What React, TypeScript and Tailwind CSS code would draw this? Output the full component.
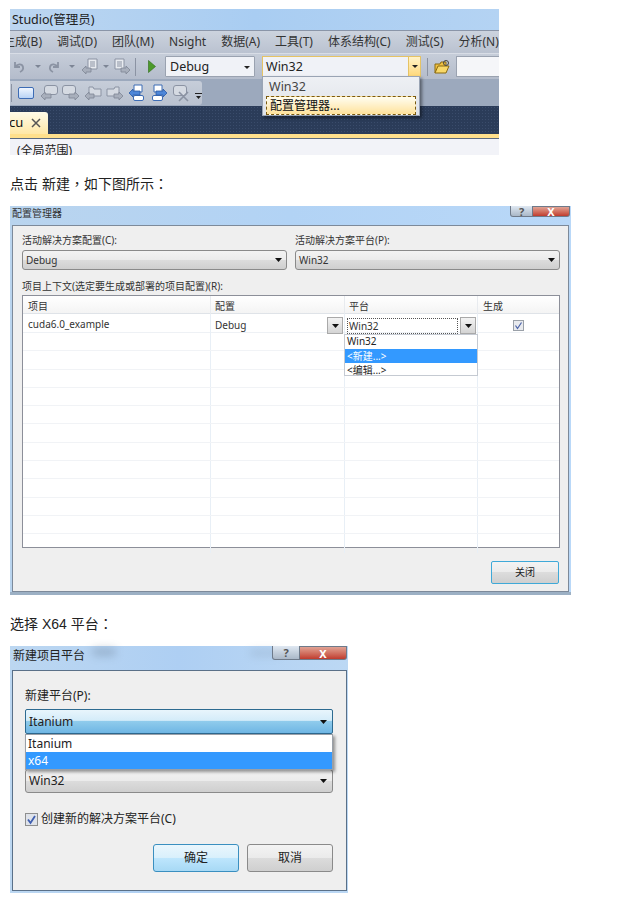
const FONT = "font-['Noto_Sans','Noto_Sans_CJK_SC',sans-serif]";
const BODY = "font-['Liberation_Sans','Noto_Sans_CJK_TC',sans-serif]";

/* ─── Little toolbar drawings ─── */
function Undo({ flip }: { flip?: boolean }) {
  return (
    <svg width="14" height="14" viewBox="0 0 14 14" className={flip ? '-scale-x-100' : ''}>
      <path d="M3 2v5h5M3 7c2-3 7-4 8 0 .5 2-1 4-3 5" fill="none" stroke="#8b93a3" strokeWidth="1.8" />
    </svg>
  );
}

function TinyCaret({ className }: { className: string }) {
  return (
    <svg width="6" height="3" viewBox="0 0 6 3" className={className}>
      <path d="M0 0h6L3 3z" fill="#7d8595" />
    </svg>
  );
}

function DocArrow({ flip, className }: { flip?: boolean; className: string }) {
  return (
    <svg width="18" height="18" viewBox="0 0 18 18" className={`${className} ${flip ? '-scale-x-100' : ''}`}>
      <path d="M7 1h9v10H7z" fill="#e8ebf0" stroke="#8b93a3" />
      <path d="M9 4h5M9 6h5M9 8h5" stroke="#8b93a3" />
      <path d="M1 12l4-4v2h5v4H5v2z" fill="#a8afbc" stroke="#7f8796" strokeWidth=".8" />
    </svg>
  );
}

function Bubble({ right }: { right?: boolean }) {
  return (
    <svg width="18" height="18" viewBox="0 0 18 18" className={right ? '-scale-x-100' : ''}>
      <rect x="4.5" y="1.5" width="13" height="9" rx="2.5" fill="#d5dae2" stroke="#8b93a3" />
      <path d="M1 12l4-4v2h6v4H5v2z" fill="#a8afbc" stroke="#7f8796" strokeWidth=".8" />
    </svg>
  );
}

function Folder({ right }: { right?: boolean }) {
  return (
    <svg width="18" height="18" viewBox="0 0 18 18" className={right ? '-scale-x-100' : ''}>
      <path d="M5 3h4l1 2h7v7H5z" fill="#d5dae2" stroke="#8b93a3" />
      <path d="M1 12l4-4v2h5v4H5v2z" fill="#a8afbc" stroke="#7f8796" strokeWidth=".8" />
    </svg>
  );
}

function BlueDoc({ right }: { right?: boolean }) {
  return (
    <svg width="18" height="18" viewBox="0 0 18 18" className={right ? '-scale-x-100' : ''}>
      <path d="M6 1h8v7H6z" fill="#fff" stroke="#3d6cb5" />
      <rect x="5.5" y="11.5" width="10" height="5" rx="1.5" fill="#fff" stroke="#3d6cb5" />
      <path d="M1 9l4-4v2h7v4H5v2z" fill="#4d86d8" stroke="#2b5aa6" strokeWidth=".8" />
    </svg>
  );
}

function Arrow() {
  return (
    <svg width="7" height="4" viewBox="0 0 7 4">
      <path d="M0 0h7L3.5 4z" fill="#111" />
    </svg>
  );
}

/* ─── Aero window title strip ─── */
function CaptionButtons({ big }: { big?: boolean }) {
  return (
    <div className={`absolute top-0 right-px flex ${big ? 'h-[14px]' : 'h-[11px]'}`}>
      <div className={`${big ? 'w-[28px]' : 'w-[23px]'} flex items-center justify-center rounded-bl-[3px] border border-t-0 border-[#6e7a8a] bg-gradient-to-b from-[#dfe8f2] to-[#aab8c8] text-[11px] leading-none font-bold text-[#555]`}>
        ?
      </div>
      <div className={`${big ? 'w-[47px]' : 'w-[37px]'} flex items-center justify-center rounded-br-[3px] border border-l-0 border-[#6e7a8a] bg-gradient-to-b from-[#e0a294] to-[#bf3a2e] text-[11px] leading-none font-bold text-white`}>
        X
      </div>
    </div>
  );
}

/* ─── Windows 7 style combo ─── */
function Combo({ label, className }: { label: string; className: string }) {
  return (
    <div className={`flex items-center justify-between rounded-[3px] border border-[#8a8a8a] bg-[linear-gradient(#f3f3f3_0%,#ebebeb_48%,#dcdcdc_50%,#cfcfcf_100%)] ${className}`}>
      <span>{label}</span>
      <Arrow />
    </div>
  );
}

function VsScreenshot() {
  const menu = ['调试(D)', '团队(M)', 'Nsight', '数据(A)', '工具(T)', '体系结构(C)', '测试(S)', '分析(N)'];
  return (
    <div className="relative w-[489px] h-[146px] overflow-hidden text-[12px] text-[#222]">
      <div className="h-[21px] pl-[2px] leading-[21px] text-[12.5px] bg-gradient-to-r from-[#bcd6f0] via-[#a9cdf2] to-[#b4d3f3]">
        Studio(管理员)
      </div>
      <div className="h-[23px] flex gap-[15px] items-center border-t border-[#8a95a8] bg-gradient-to-b from-[#ccd3de] to-[#bac2d0] text-[#333] whitespace-nowrap">
        <span className="-ml-[7px]">生成(B)</span>
        {menu.map((m) => (
          <span key={m}>{m}</span>
        ))}
      </div>
      <div className="h-[26px] flex items-center bg-gradient-to-b from-[#c6cdd9] to-[#b4bccb] border-t border-[#d8dde6]">
        <div className="ml-[2px]"><Undo /></div>
        <TinyCaret className="ml-[9px]" />
        <div className="ml-[6px]"><Undo flip /></div>
        <TinyCaret className="ml-[8px]" />
        <DocArrow className="ml-[6px]" />
        <TinyCaret className="ml-[4px]" />
        <DocArrow flip className="ml-[4px]" />
        <div className="ml-[4px] w-px h-[18px] bg-[#8b93a3]" />
        <svg width="8" height="13" viewBox="0 0 8 13" className="ml-[12px]">
          <path d="M.5 .5l7 6-7 6z" fill="#4c9a2a" stroke="#2d6a17" strokeWidth=".6" />
        </svg>
        <div className="ml-[9px] w-[90px] h-[21px] flex items-center justify-between px-[4px] pt-px bg-[#f0f2f7] border border-[#9aa2b0] rounded-[1px] text-[12.5px]">
          <span>Debug</span>
          <svg width="6" height="3" viewBox="0 0 6 3"><path d="M0 0h6L3 3z" fill="#222" /></svg>
        </div>
        <div className="ml-[7px] w-[159px] h-[21px] flex items-center border border-[#e5c365] bg-[#f0f2f7] text-[12.5px]">
          <span className="flex-1 pl-[3px] pt-px">Win32</span>
          <div className="w-[12px] h-full flex items-center justify-center border-l border-[#e5c365] bg-gradient-to-b from-[#fff3c8] to-[#ffd87a]">
            <svg width="6" height="3" viewBox="0 0 6 3"><path d="M0 0h6L3 3z" fill="#222" /></svg>
          </div>
        </div>
        <div className="ml-[6px] w-px h-[18px] bg-[#8b93a3]" />
        <svg width="17" height="16" viewBox="0 0 17 16" className="ml-[6px]">
          <path d="M1 14V5h5l1-2h5v3" fill="#f0c040" stroke="#8a6a10" />
          <path d="M1 14l3-7h11l-3 7z" fill="#f8d868" stroke="#8a6a10" />
          <circle cx="12" cy="4" r="2.5" fill="none" stroke="#444" />
        </svg>
        <div className="ml-[5px] flex-1 h-[21px] bg-[#f5f6f9] border border-[#9aa2b0] border-r-0 rounded-l-[1px]" />
      </div>
      <div className="h-[27px] flex items-center bg-[#9ca9bd]">
        <div className="h-[24px] w-[192px] flex items-center bg-gradient-to-b from-[#c6cdd9] to-[#b9c1cf] rounded-r-[3px]">
          <div className="w-px h-[18px] ml-px bg-[#8b93a3]" />
          <div className="ml-[6px] w-[16px] h-[12px] rounded-[2px] border border-[#3d6cb5] bg-gradient-to-b from-[#f0f6ff] to-[#b9d3f5]" />
          <div className="ml-[6px] flex items-center gap-[4px]">
            <Bubble />
            <Bubble right />
            <Folder />
            <Folder right />
            <BlueDoc />
            <BlueDoc right />
          </div>
          <svg width="18" height="18" viewBox="0 0 18 18" className="ml-[4px]">
            <rect x="1.5" y="1.5" width="13" height="10" rx="2.5" fill="#d5dae2" stroke="#8b93a3" />
            <path d="M7 8l9 9M16 8l-9 9" stroke="#8b93a3" strokeWidth="1.6" />
          </svg>
          <svg width="7" height="7" viewBox="0 0 7 7" className="ml-[5px] mt-[8px]">
            <path d="M0 0h7v1H0zM1 3h5L3.5 6z" fill="#222" />
          </svg>
        </div>
      </div>
      <div className="h-[28px] flex items-end bg-[#2b3c59] bg-[radial-gradient(#3a4c6b_0.7px,transparent_0.9px)] bg-[length:3px_3px]">
        <div className="w-[38px] h-[22px] flex items-center justify-between pr-[7px] rounded-tr-[3px] bg-gradient-to-b from-[#fffbe8] to-[#ffe8a6] text-[#111] text-[13px]">
          <span className="-ml-[1px]">cu</span>
          <svg width="10" height="10" viewBox="0 0 10 10">
            <path d="M1 1l8 8M9 1l-8 8" stroke="#555" strokeWidth="1.5" />
          </svg>
        </div>
      </div>
      <div className="h-[5px] bg-[#ffe08c] border-b border-[#5a6a80]" />
      <div className="h-[16px] pl-[7px] bg-[#f2f3f8] text-[12px] leading-[24px] overflow-hidden">(全局范围)</div>

      {/* open platform dropdown */}
      <div className="absolute left-[252px] top-[67px] w-[158px] h-[40px] px-[3px] border border-[#9aa4b4] bg-gradient-to-b from-[#eef0f4] to-[#dfe3e9] shadow-[2px_2px_3px_rgba(0,0,0,0.45)] text-[12px]">
        <div className="h-[19px] pl-[3px] leading-[19px] text-[12.5px] text-[#444]">Win32</div>
        <div className="h-[19px] pl-[3px] leading-[18px] border border-dashed border-[#7a5a10] bg-gradient-to-b from-[#fffdf0] to-[#ffe29a] text-[#111] whitespace-nowrap">
          配置管理器...
        </div>
      </div>
    </div>
  );
}

function ConfigDialog() {
  const rows = Array.from({ length: 12 });
  return (
    <div className="relative w-[561px] h-[389px] text-[10px] text-[#333] bg-gradient-to-r from-[#b9d4ee] via-[#b2d3f5] to-[#b9d8f8] border-b-[3px] border-[#9cb0c4]">
      <div className="h-[19px] pl-[2px] leading-[15px] text-[#333]">配置管理器</div>
      <CaptionButtons />
      <div className="mx-[2px] h-[367px] pl-[9px] pr-[8px] pt-[7px] bg-[#efefef] border border-[#7d8a9a]">
        <div className="flex gap-[8px]">
          <div className="w-[265px]">
            <div className="h-[15px] leading-[15px]">活动解决方案配置(C):</div>
            <Combo label="Debug" className="mt-[2px] h-[20px] px-[3px] pr-[4px]" />
          </div>
          <div className="w-[265px]">
            <div className="h-[15px] leading-[15px]">活动解决方案平台(P):</div>
            <Combo label="Win32" className="mt-[2px] h-[20px] px-[3px] pr-[4px]" />
          </div>
        </div>
        <div className="mt-[9px] h-[15px] leading-[15px]">项目上下文(选定要生成或部署的项目配置)(R):</div>
        <div className="mt-px h-[253px] bg-white border border-[#8c8f99]">
          <div className="h-[18px] grid grid-cols-[188px_134px_133px_1fr] bg-gradient-to-b from-white to-[#f4f4f4] border-b border-[#dfe3e8]">
            <span className="pl-[5px] leading-[20px] border-r border-[#e8ebef]">项目</span>
            <span className="pl-[4px] leading-[20px] border-r border-[#e8ebef]">配置</span>
            <span className="pl-[4px] leading-[20px] border-r border-[#e8ebef]">平台</span>
            <span className="pl-[5px] leading-[20px]">生成</span>
          </div>
          <div className="h-[19px] grid grid-cols-[188px_134px_133px_1fr] items-stretch border-b border-[#eef1f5]">
            <span className="pl-[5px] leading-[21px] border-r border-[#e8eff6]">cuda6.0_example</span>
            <div className="pl-[4px] pr-[1px] pt-[2px] flex items-center justify-between border-r border-[#e8eff6]">
              <span>Debug</span>
              <div className="w-[16px] h-[17px] flex items-center justify-center border border-[#a9a9a9] bg-gradient-to-b from-[#f3f3f3] to-[#d4d4d4]"><Arrow /></div>
            </div>
            <div className="pl-[2px] pr-[1px] pt-[2px] flex items-center justify-between border-r border-[#e8eff6]">
              <div className="w-[111px] h-[16px] pl-[1px] leading-[15px] border border-dotted border-[#555]">Win32</div>
              <div className="w-[16px] h-[17px] flex items-center justify-center border border-[#a9a9a9] bg-gradient-to-b from-[#f3f3f3] to-[#d4d4d4]"><Arrow /></div>
            </div>
            <div className="pt-[2px] flex items-center justify-center">
              <div className="w-[11px] h-[11px] flex items-center justify-center border border-[#9aa0a8] bg-[#e8eaee]">
                <svg width="9" height="9" viewBox="0 0 9 9"><path d="M1.5 4.5l2 3 4-6" fill="none" stroke="#4a62a8" strokeWidth="1.2" /></svg>
              </div>
            </div>
          </div>
          {rows.map((_, i) => (
            <div key={i} className="h-[18.3px] grid grid-cols-[188px_134px_133px_1fr] border-b border-[#f1f3f6] last:border-b-0">
              <span className="border-r border-[#e8eff6]" />
              <span className="border-r border-[#e8eff6]" />
              <span className="border-r border-[#e8eff6]" />
              <span />
            </div>
          ))}
        </div>
        <div className="mt-[13px] flex justify-end pr-px">
          <div className="w-[68px] h-[23px] flex items-center justify-center rounded-[2px] border border-[#3fa9d8] bg-[linear-gradient(#f3f3f3_0%,#ebebeb_48%,#dcdcdc_50%,#cfcfcf_100%)] text-[#222]">
            关闭
          </div>
        </div>
      </div>

      {/* platform list opened under the cell */}
      <div className="absolute left-[334px] top-[128px] w-[134px] h-[42px] bg-white border border-[#c5cad2] text-[#222]">
        <div className="h-[14px] pl-[2px] leading-[13px]">Win32</div>
        <div className="h-[14px] pl-[2px] leading-[14px] bg-[#3399ff] text-white">&lt;新建...&gt;</div>
        <div className="h-[13px] pl-[2px] leading-[14px]">&lt;编辑...&gt;</div>
      </div>
    </div>
  );
}

function PlatformDialog() {
  return (
    <div className="relative w-[338px] h-[247px] text-[12px] text-[#222] bg-gradient-to-r from-[#bcd7f1] via-[#aecff3] to-[#bcd8f4]">
      {/* aero glass smudges behind the title */}
      <div className="absolute left-[82px] top-[2px] w-[24px] h-[8px] rounded-full bg-[#6b7f96] opacity-40 blur-[4px]" />
      <div className="absolute left-[240px] top-[4px] w-[30px] h-[6px] rounded-full bg-[#7f93aa] opacity-30 blur-[4px]" />
      <div className="relative h-[24px] pl-[3px] leading-[20px]">新建项目平台</div>
      <CaptionButtons big />
      <div className="ml-[2px] mr-px h-[221px] pl-[12px] pr-[13px] bg-[#efefef] border border-[#5a7088]">
        <div className="mt-[16px] h-[17px] leading-[17px]">新建平台(P):</div>
        <div className="mt-[5px] h-[25px] px-[3px] flex items-center justify-between rounded-[2px] border border-[#2d6a90] bg-[linear-gradient(#e8f5fc_0%,#d4ecf9_45%,#8fcbec_50%,#6fb6e4_100%)] pr-[5px]">
          <span>Itanium</span>
          <Arrow />
        </div>
        <div className="mt-[35px] h-[24px] px-[3px] pr-[5px] flex items-center justify-between rounded-[3px] border border-[#8a8a8a] bg-[linear-gradient(#f3f3f3_0%,#ebebeb_48%,#dcdcdc_50%,#cfcfcf_100%)]">
          <span>Win32</span>
          <Arrow />
        </div>
        <div className="mt-[17px] flex items-center gap-[3px]">
          <div className="w-[13px] h-[13px] flex items-center justify-center border border-[#8e8f8f] bg-[#dfe3ea]">
            <svg width="11" height="11" viewBox="0 0 11 11"><path d="M2 5.5l2.5 3.5 4.5-7" fill="none" stroke="#3f5fb0" strokeWidth="1.8" /></svg>
          </div>
          <span>创建新的解决方案平台(C)</span>
        </div>
        <div className="mt-[16px] flex justify-end gap-[8px]">
          <div className="w-[86px] h-[28px] flex items-center justify-center rounded-[3px] border border-[#3a8fc0] bg-[linear-gradient(#eaf6fd_0%,#d9f0fc_48%,#bee6fd_50%,#a7d9f5_100%)]">确定</div>
          <div className="w-[86px] h-[28px] flex items-center justify-center rounded-[3px] border border-[#8a8a8a] bg-[linear-gradient(#f3f3f3_0%,#ebebeb_48%,#dcdcdc_50%,#cfcfcf_100%)]">取消</div>
        </div>
      </div>
      <div className="absolute left-[15px] top-[88px] w-[308px] h-[36px] bg-white border border-[#9aa0a8] shadow-[2px_2px_3px_rgba(0,0,0,0.4)]">
        <div className="h-[17px] pl-[2px] leading-[17px]">Itanium</div>
        <div className="h-[17px] pl-[2px] leading-[17px] bg-[#3399ff] text-white">x64</div>
      </div>
    </div>
  );
}

export default function App() {
  return (
    <div className={`w-[641px] h-[900px] overflow-hidden bg-white pl-[10px] pt-[9px] ${FONT}`}>
      <VsScreenshot />
      <p className={`mt-[19px] h-[20px] text-[14px] leading-[20px] text-[#222] ${BODY}`}>点击 新建，如下图所示：</p>
      <div className="mt-[12px]">
        <ConfigDialog />
      </div>
      <p className={`mt-[19px] h-[20px] text-[14px] leading-[20px] text-[#222] ${BODY}`}>选择 X64 平台：</p>
      <div className="mt-[12px]">
        <PlatformDialog />
      </div>
    </div>
  );
}
